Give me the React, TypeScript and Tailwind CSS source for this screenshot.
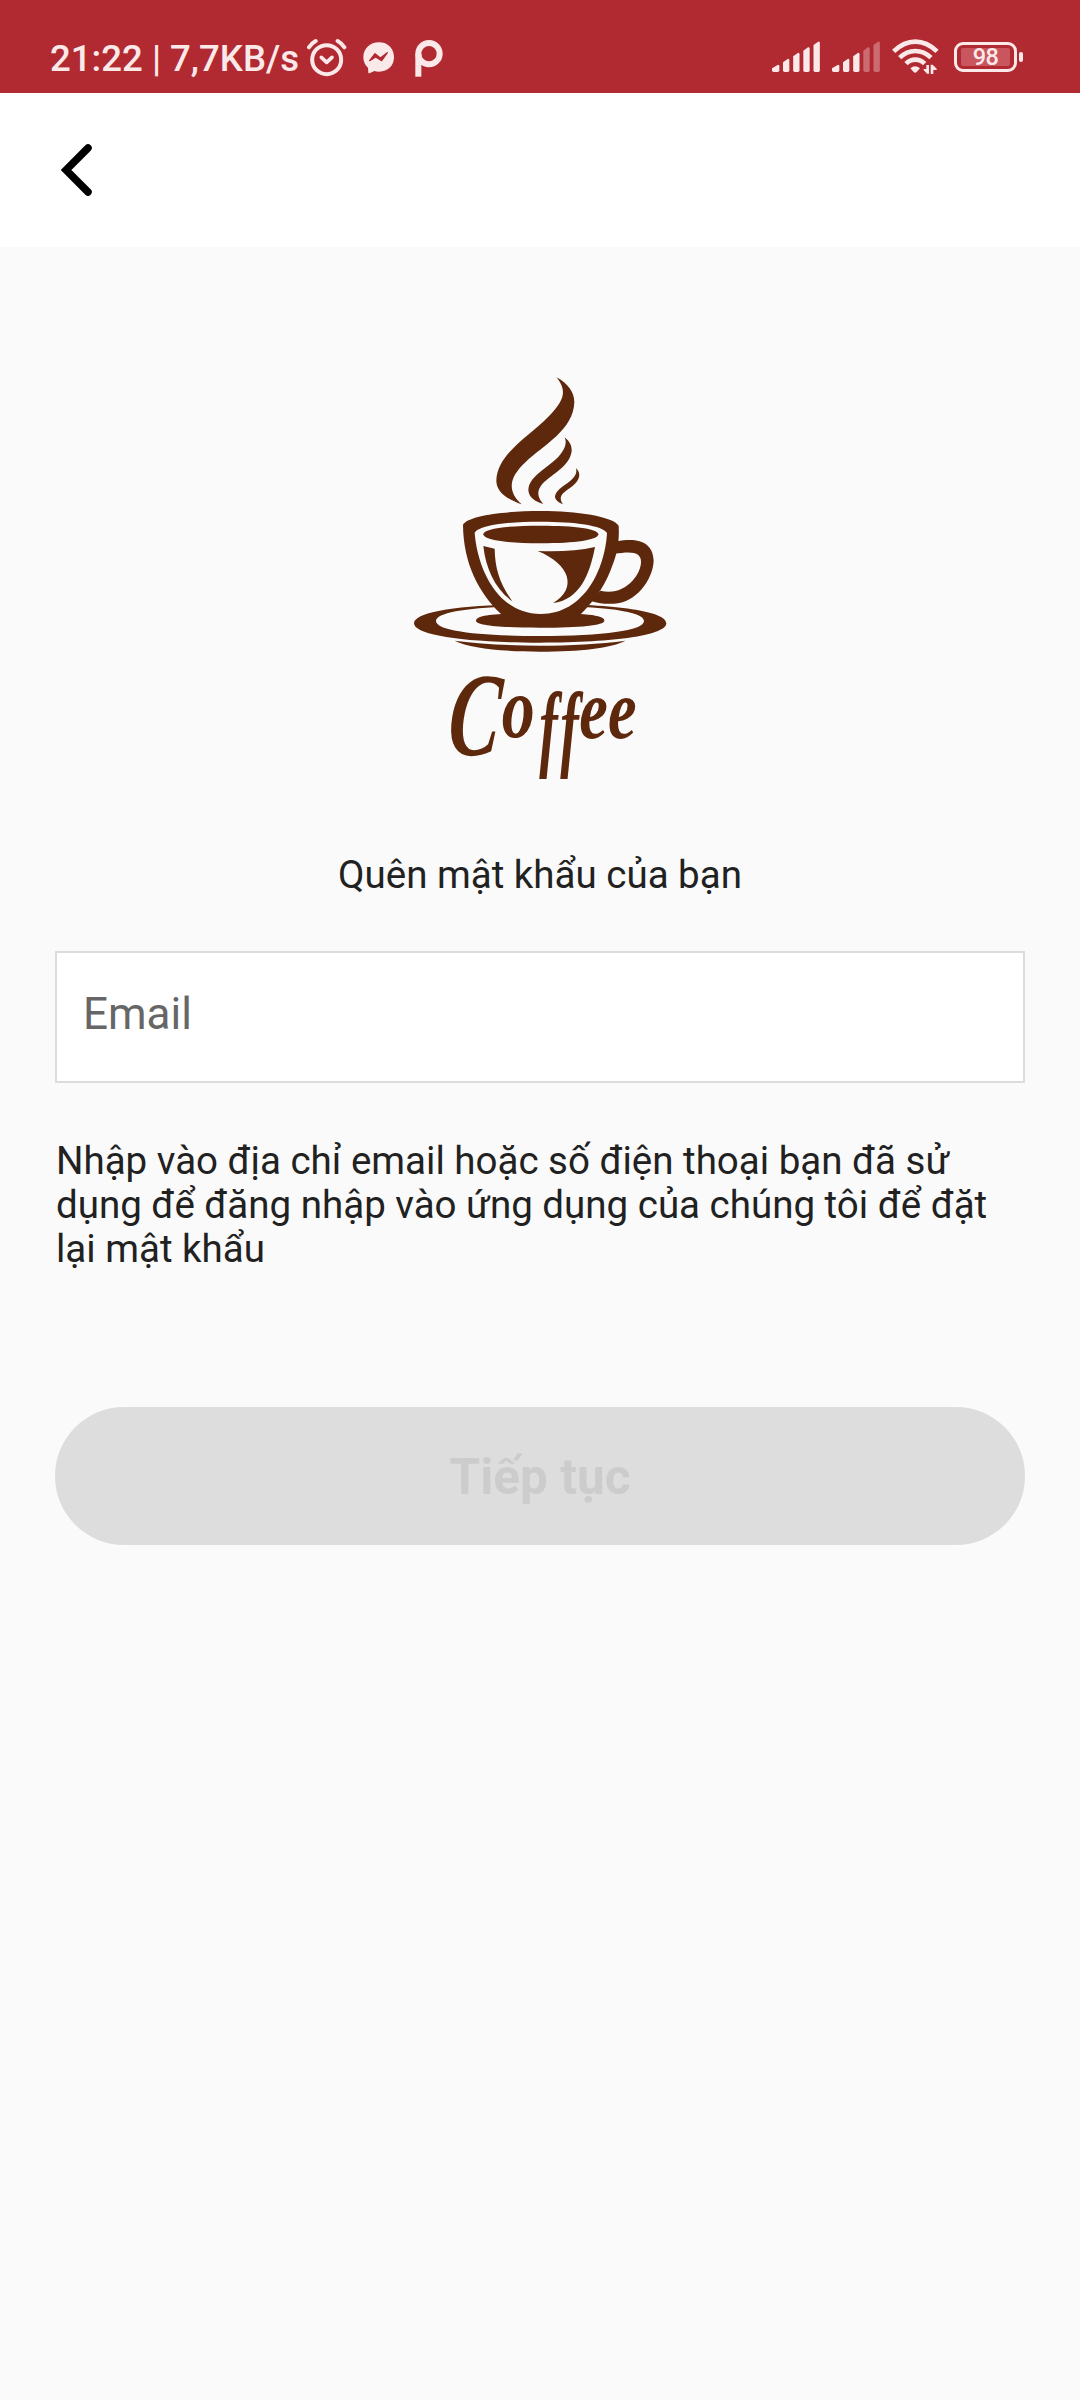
import React from "react";

const ROBOTO = "font-[Roboto,'Liberation_Sans',sans-serif]";

function AlarmIcon() {
  return (
    <svg className="ml-[7px] h-[40px] w-[40px]" viewBox="0 0 120 120" fill="none" stroke="#fbe9ea" strokeLinecap="round" strokeLinejoin="round">
      <circle cx="59" cy="65" r="43.500" strokeWidth="12" />
      <path d="M43 58 L59 73 L75 58" strokeWidth="11" />
      <path d="M6 28 Q13 16 26 9 M92 9 Q105 16 112 28" strokeWidth="12" />
    </svg>
  );
}

function MessengerIcon() {
  return (
    <svg className="ml-[16px] h-[32px] w-[32px]" viewBox="0 0 96 96">
      <path d="M48 1 C21 1 1 20 1 46 C1 60 7 70 15 77 L16 92 Q17 95 21 93 L34 87 Q40 89 48 89 C75 89 93 71 93 46 C93 20 75 1 48 1Z" fill="#fbe9ea" />
      <path d="M20 56 L36 35 L52 48 L73 32 L56 56 L38 45Z" fill="#b22a31" stroke="#b22a31" strokeWidth="4" strokeLinejoin="round" />
    </svg>
  );
}

function ParkingIcon() {
  return (
    <svg className="ml-[20px] h-[37px] w-[28px]" viewBox="0 0 84 111" fill="none" stroke="#fbe9ea">
      <path d="M10 110 V42" strokeWidth="18" />
      <circle cx="42" cy="41" r="32" strokeWidth="18" />
    </svg>
  );
}

function SignalIcon({ bars }: { bars: number }) {
  const tops = [72, 54, 36, 19, 2];
  return (
    <svg className="h-[32px] w-[48px]" viewBox="0 0 144 96" fill="#fbe9ea">
      {tops.map((top, i) => {
        const x = i === 0 ? 0 : 33 + (i - 1) * 30.5;
        const w = i === 0 ? 22 : 19;
        return (
          <path
            key={top}
            opacity={i < bars ? 1 : 0.35}
            d={`M${x} ${top + 10} L${x + w - 5} ${top} Q${x + w} ${top - 2} ${x + w} ${top + 4} V88 Q${x + w} 93 ${x + w - 5} 93 H${x + 5} Q${x} 93 ${x} 88Z`}
          />
        );
      })}
    </svg>
  );
}

function WifiIcon() {
  return (
    <svg className="ml-[12px] h-[36px] w-[47px]" viewBox="0 0 141 108" fill="none" stroke="#fbe9ea" strokeWidth="14">
      <path d="M5 37 Q36 8 70 8 Q104 8 135 37" />
      <path d="M23 56 Q44 36 70 36 Q96 36 117 56" />
      <path d="M42 74 Q54 62 70 62 Q86 62 98 74" />
      <path d="M55 88 Q69 75 84 88 L74 99 Q69 103 65 99Z" fill="#fbe9ea" stroke="none" />
      <path d="M103 78 H111 V104 H105 L95 93 V90 H103Z M116 105 V77 H122 L134 89 V93 H124 V105Z" fill="#fbe9ea" stroke="none" />
    </svg>
  );
}

function Battery() {
  return (
    <div className="ml-[15px] flex items-center gap-[2px]">
      <div className="flex h-[30px] w-[63px] items-center justify-center rounded-[9px] border-[3px] border-[#fbe9ea]">
        <div className="flex h-[18px] w-[49px] items-center justify-center rounded-[2px] bg-[#c9565f] pt-[2px] text-[23.5px] leading-none font-medium tracking-[-0.5px] text-[#fbe9ea]">
          98
        </div>
      </div>
      <div className="h-[10px] w-[4px] rounded-[2px] bg-[#fbe9ea]" />
    </div>
  );
}

function CoffeeLogo() {
  return (
    <svg className="h-[430px] w-[280px]" viewBox="0 0 840 1290" fill="#5e280d" role="img" aria-label="Coffee">
      {/* Steam */}
      <path d="M470 52 C505 72 523 98 523 126 C521 210 430 255 377 306 C330 350 318 390 365 433 C320 417 289 395 289 362 C291 280 390 228 445 170 C493 121 502 93 470 52Z" />
      <path d="M494 232 C510 245 516 258 515 274 C508 325 447 344 422 379 C410 396 414 415 430 432 C405 425 386 412 385 390 C388 345 450 322 479 286 C496 265 501 249 494 232Z" />
      <path d="M528 324 C538 334 540 344 536 355 C526 380 494 390 484 407 C480 415 483 425 489 433 C474 428 465 419 465 409 C469 386 500 375 516 358 C528 346 531 336 528 324Z" />
      <g transform="translate(0 420)">
        {/* Saucer */}
        <path fillRule="evenodd" d="M420 312 C650 312 799 334 799 370 C799 405 650 428 420 428 C190 428 42 405 42 370 C42 334 190 312 420 312Z M420 318 C230 318 108 334 108 363 C108 392 230 408 420 408 C610 408 732 392 732 363 C732 334 610 318 420 318Z" />
        <path d="M164 422 C320 442 520 442 677 422 C635 444 540 455 420 455 C300 455 210 444 164 422Z" />
        <path d="M228 362 C228 344 290 340 420 340 C550 340 613 344 613 362 C613 376 540 383 420 383 C300 383 228 376 228 362Z" />
        {/* Handle */}
        <path fillRule="evenodd" d="M650 124 C715 111 760 127 761 183 C758 242 706 309 642 311 C615 313 590 309 570 302 L601 272 C677 290 724 221 723 185 C723 160 702 151 642 162Z" />
        {/* Bowl */}
        <path d="M189 74 C205 47 315 33 423 33 C530 33 638 49 656 77 C659 130 650 169 630 215 C608 269 578 306 540 345 C542 358 305 358 304 343 C236 278 190 190 189 74Z" />
        <path fill="#fafafa" d="M224 98 C232 205 292 342 422 342 C552 342 615 207 621 99 C607 76 525 65 422 65 C319 65 238 76 224 98Z" />
        <path d="M250 103 C250 86 318 77 422 77 C526 77 595 86 595 103 C595 120 526 130 422 130 C318 130 250 120 250 103Z" />
        <path d="M250 138 L284 146 C285 207 300 252 337 304 C286 268 257 205 250 138Z" />
        <path d="M413 153 C478 156 535 152 585 141 C569 225 538 300 459 309 C533 266 511 193 413 153Z" />
      </g>
      {/* Wordmark */}
      <g fontFamily="'Liberation Serif', serif" fontStyle="italic" fontWeight="700">
        <text transform="translate(138 1184) skewX(-5) scale(.86 1.320)" fontSize="270">C</text>
        <text transform="translate(305 1130) scale(.86 1.120)" fontSize="230">o</text>
        <text transform="translate(418 1197) scale(.74 1.280)" fontSize="225" letterSpacing="14">ff</text>
        <text transform="translate(538 1134) scale(.86 1.120)" fontSize="225">ee</text>
      </g>
    </svg>
  );
}

export default function App() {
  return (
    <div className={`flex h-[2400px] w-[1080px] flex-col bg-[#fafafa] text-[#212121] ${ROBOTO}`}>
      <div className="flex h-[93px] items-start justify-between bg-[#b22a31] pr-[57px] pl-[50px] text-[#fbe9ea]">
        <div className="flex items-center pt-[36px]">
          <span className="w-[250px] pt-[2px] text-[36.6px] leading-[42px] font-medium whitespace-nowrap">21:22 | 7,7KB/s</span>
          <AlarmIcon />
          <MessengerIcon />
          <ParkingIcon />
        </div>
        <div className="flex items-center pt-[39px]">
          <SignalIcon bars={5} />
          <div className="ml-[12px] flex">
            <SignalIcon bars={3} />
          </div>
          <WifiIcon />
          <Battery />
        </div>
      </div>

      <header className="flex h-[154px] items-center bg-white pl-[61px]">
        <button aria-label="Back" className="block">
          <svg className="h-[54px] w-[32px]" viewBox="0 0 32 54" fill="none" stroke="#000" strokeWidth="7.500" strokeLinecap="round">
            <path d="M27 5 L5 27 L27 49" />
          </svg>
        </button>
      </header>

      <main className="flex flex-col px-[55px] pt-[113px]">
        <div className="flex justify-center">
          <CoffeeLogo />
        </div>
        <h1 className="mt-[63px] text-center text-[38.5px] leading-[44px]">Quên mật khẩu của bạn</h1>
        <input
          type="email"
          placeholder="Email"
          className="mt-[54px] h-[132px] border-2 border-[#dcdcdc] bg-white px-[26px] pb-[6px] text-[44px] leading-[52px] outline-none placeholder:text-[#666666]"
        />
        <p className="mt-[56px] pl-px text-[38.5px] leading-[44px] whitespace-nowrap">
          Nhập vào địa chỉ email hoặc số điện thoại bạn đã sử
          <br />
          dụng để đăng nhập vào ứng dụng của chúng tôi để đặt
          <br />
          lại mật khẩu
        </p>
        <button className="mt-[136px] h-[138px] rounded-[69px] bg-[#dddddd] pt-[2px] text-[49.5px] font-bold text-[#cccccc]">
          Tiếp tục
        </button>
      </main>
    </div>
  );
}
